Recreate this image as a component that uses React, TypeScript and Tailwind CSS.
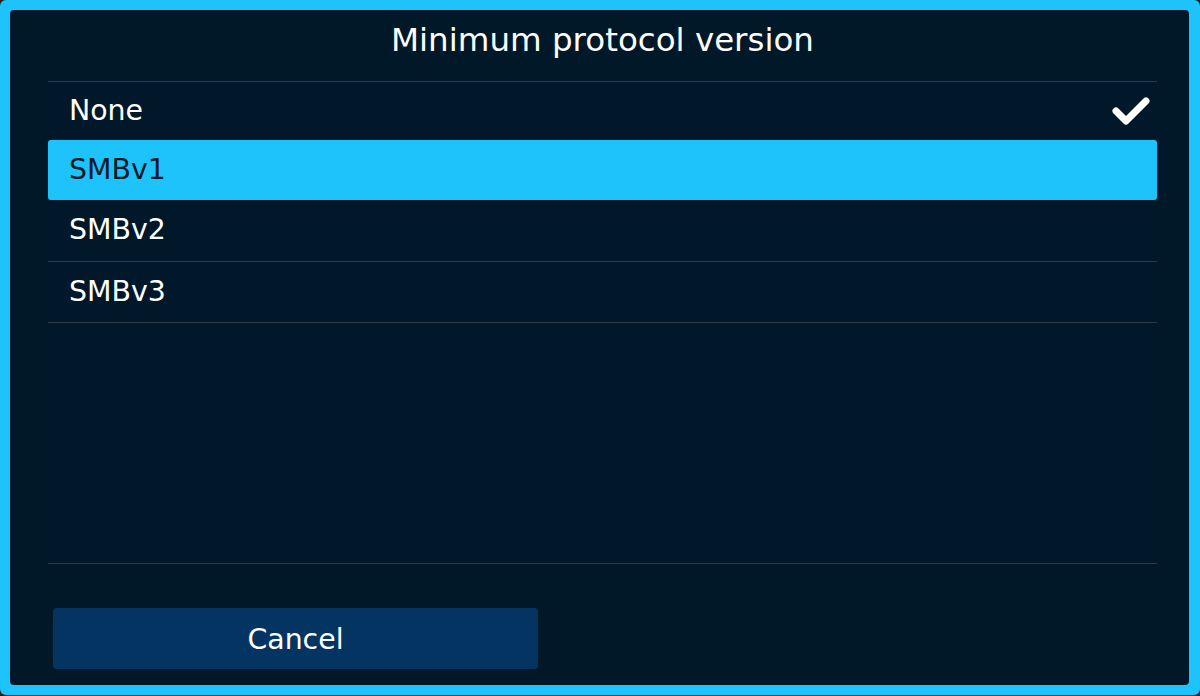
const options = [
  { label: 'None', h: 'h-[58px]' },
  { label: 'SMBv1', h: 'h-[60px]' },
  { label: 'SMBv2', h: 'h-[62px]' },
  { label: 'SMBv3', h: 'h-[61px]' },
];

const App = () => (
  <div
    className="w-[1200px] h-[696px] bg-[#1f2227] overflow-hidden"
    style={{ fontFamily: '"DejaVu Sans", sans-serif' }}
  >
    <div className="w-[1200px] h-[695px] bg-[#1ec3fc] rounded-[6px] p-[10px] pr-[11px]">
      <div className="h-[675px] bg-[#011828] rounded-[4px] flex flex-col px-[38px] pr-[32px]">
        <h1 className="h-[71px] pt-[10px] text-center text-white text-[32.5px] leading-[40px]">
          Minimum protocol version
        </h1>
        <div className="h-[483px] bg-[#01172a] border-t border-b border-[#2d3a47] flex flex-col">
          {options.map((opt, i) => (
            <div
              key={opt.label}
              className={
                i === 1
                  ? `${opt.h} shrink-0 flex items-center px-[21px] bg-[#1ec3fc] rounded-[3px] text-[#0a1a26] text-[28.4px]`
                  : `${opt.h} shrink-0 flex items-center justify-between px-[21px] pr-[6px] text-white text-[28.4px] ${i === 0 ? '' : 'border-b border-[#2d3a47]'}`
              }
            >
              <span>{opt.label}</span>
              {i === 0 && (
                <svg width="40" height="32" viewBox="0 0 40 32">
                  <path
                    d="M5 16 L15 26 L35 6"
                    fill="none"
                    stroke="#fff"
                    strokeWidth="7"
                    strokeLinecap="round"
                    strokeLinejoin="round"
                  />
                </svg>
              )}
            </div>
          ))}
        </div>
        <div className="pt-[44px] pl-[5px]">
          <button className="w-[485px] h-[61px] pt-[3px] bg-[#033462] rounded-[4px] text-white text-[28.4px]">
            Cancel
          </button>
        </div>
      </div>
    </div>
  </div>
);

export default App;
